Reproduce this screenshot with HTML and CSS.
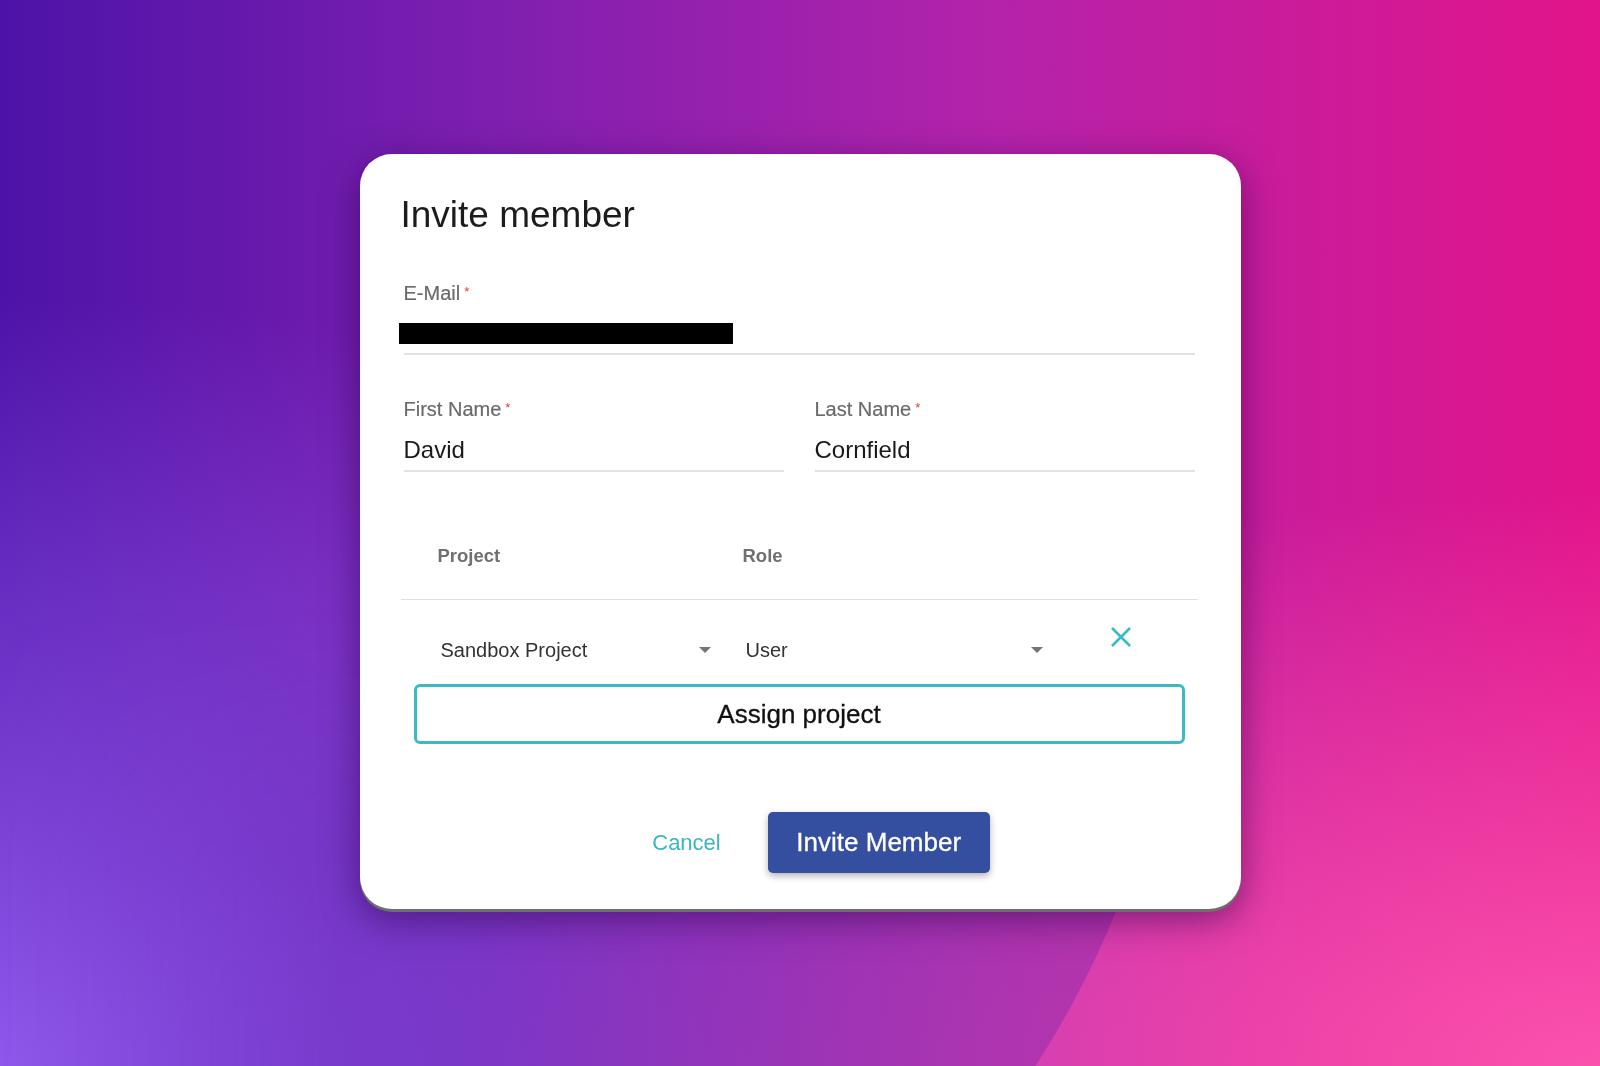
FILE: index.html
```html
<!DOCTYPE html>
<html lang="en">
<head>
    <meta charset="UTF-8">
    <meta name="viewport" content="width=device-width, initial-scale=1.0">
    <title>Invite member</title>
    <link rel="stylesheet" href="styles.css">
</head>
<body>

<div class="dialog">
    <h1 class="dialog-title">Invite member</h1>

    <div class="field">
        <label>E-Mail<span class="req">*</span></label>
        <div class="field-input field-input-email"><span class="redacted"></span></div>
    </div>

    <div class="field-row">
        <div class="field">
            <label>First Name<span class="req">*</span></label>
            <div class="field-input">David</div>
        </div>
        <div class="field">
            <label>Last Name<span class="req">*</span></label>
            <div class="field-input">Cornfield</div>
        </div>
    </div>

    <div class="projects">
        <div class="projects-head">
            <span>Project</span>
            <span>Role</span>
        </div>
        <div class="projects-row">
            <div class="select select-project"><span>Sandbox Project</span><i class="caret"></i></div>
            <div class="select select-role"><span>User</span><i class="caret"></i></div>
            <button class="remove" title="Remove">
                <svg width="22" height="22" viewBox="0 0 22 22"><path d="M2 2 L20 20 M20 2 L2 20" stroke="#3bbac6" stroke-width="2.6" fill="none"/></svg>
            </button>
        </div>
    </div>

    <button class="assign">Assign project</button>

    <div class="actions">
        <button class="cancel">Cancel</button>
        <button class="invite">Invite Member</button>
    </div>
</div>

</body>
</html>
```

FILE: styles.css
```css
html, body {
    height: 100%;
}
body {
    font-family: "Liberation Sans", Arial, sans-serif;
    margin: 0;
    padding: 0 0 3px 0;
    box-sizing: border-box;
    display: flex;
    justify-content: center;
    align-items: center;
    overflow: hidden;
    background:
        radial-gradient(120% 90% at 100% 100%, #fb52ae 0%, rgba(251, 82, 174, 0) 60%),
        radial-gradient(110% 100% at 0% 100%, #9058ec 0%, rgba(143, 87, 234, 0) 72%),
        linear-gradient(to right, #4d13a8 0%, #7d1fb0 30%, #b423aa 62%, #e2148a 100%);
}
/* darker wallpaper blob under the dialog */
body::before {
    content: "";
    position: fixed;
    left: -709px;
    top: -396px;
    width: 1896px;
    height: 1896px;
    border-radius: 50%;
    background-color: rgba(90, 30, 170, 0.3);
    -webkit-mask-image: linear-gradient(to top, #000 34%, transparent 47%), linear-gradient(to right, transparent 37%, #000 55%);
    -webkit-mask-composite: source-in;
    mask-image: linear-gradient(to top, #000 34%, transparent 47%), linear-gradient(to right, transparent 37%, #000 55%);
    mask-composite: intersect;
}
.dialog {
    position: relative;
    z-index: 1;
    width: 881px;
    box-sizing: border-box;
    background-color: white;
    border-radius: 32px;
    padding: 39px 46px 36px 44px;
    box-shadow: 0 3px 0 #6e6e6e, 0 10px 36px rgba(40, 0, 70, 0.55);
}
.dialog-title {
    margin: 0 0 0 -3px;
    font-size: 37px;
    line-height: 44px;
    font-weight: normal;
    color: #1c1c1c;
}
.field {
    margin-top: 47px;
}
.field label {
    display: block;
    font-size: 20px;
    line-height: 18px;
    color: #6b6b6b;
    -webkit-text-stroke: 0.2px #6b6b6b;
}
.req {
    color: #e53935;
    font-size: 13px;
    vertical-align: top;
    margin-left: 4px;
    position: relative;
    top: -1px;
    -webkit-text-stroke: 0;
}
.field-input {
    height: 40px;
    padding-top: 12px;
    line-height: 40px;
    font-size: 24px;
    color: #1a1a1a;
    border-bottom: 2px solid #e2e2e2;
}
.field-input-email {
    height: 30px;
    padding-top: 21px;
}
.redacted {
    display: block;
    width: 334px;
    height: 21px;
    margin-left: -5px;
    background-color: #000;
}
.field-row {
    display: flex;
    gap: 31px;
    margin-top: 45px;
}
.field-row .field {
    flex: 1;
    margin-top: 0;
}
.projects {
    margin: 41px -3px 0;
}
.projects-head,
.projects-row {
    display: grid;
    grid-template-columns: 305px 330px 1fr;
    padding-left: 37px;
}
.projects-head {
    height: 86px;
    align-items: center;
    border-bottom: 1px solid #e0e0e0;
    font-size: 18.5px;
    font-weight: bold;
    color: #707070;
}
.projects-row {
    height: 84px;
}
.select {
    display: flex;
    align-items: center;
    justify-content: space-between;
    height: 24px;
    margin-top: 38px;
    padding: 0 3px;
    font-size: 20px;
    color: #333;
}
.select-project {
    width: 276px;
    box-sizing: border-box;
}
.select-role {
    width: 303px;
    box-sizing: border-box;
}
.caret {
    width: 0;
    height: 0;
    border-left: 6px solid transparent;
    border-right: 6px solid transparent;
    border-top: 6px solid #757575;
}
.remove {
    align-self: start;
    margin-top: 26px;
    padding: 0 0 0 37px;
    border: none;
    background: none;
    cursor: pointer;
    width: 59px;
    height: 22px;
}
.remove svg {
    display: block;
}
.assign {
    display: block;
    width: calc(100% - 20px);
    margin: 0 10px;
    height: 60px;
    box-sizing: border-box;
    border: 3px solid #3bbac6;
    border-radius: 6px;
    background-color: white;
    font-family: inherit;
    font-size: 26px;
    color: #111;
    -webkit-text-stroke: 0.3px #111;
    cursor: pointer;
}
.actions {
    display: flex;
    justify-content: center;
    gap: 23px;
    margin-top: 68px;
    padding-left: 20px;
}
.actions button {
    font-family: inherit;
    height: 61px;
    border: none;
    cursor: pointer;
}
.cancel {
    padding: 0 24px;
    background: none;
    font-size: 22px;
    color: #3ab5c2;
}
.invite {
    width: 222px;
    background-color: #354fa0;
    border-radius: 5px;
    font-size: 26px;
    color: white;
    -webkit-text-stroke: 0.3px white;
    box-shadow: 0 3px 7px rgba(0, 0, 0, 0.3);
}
```
